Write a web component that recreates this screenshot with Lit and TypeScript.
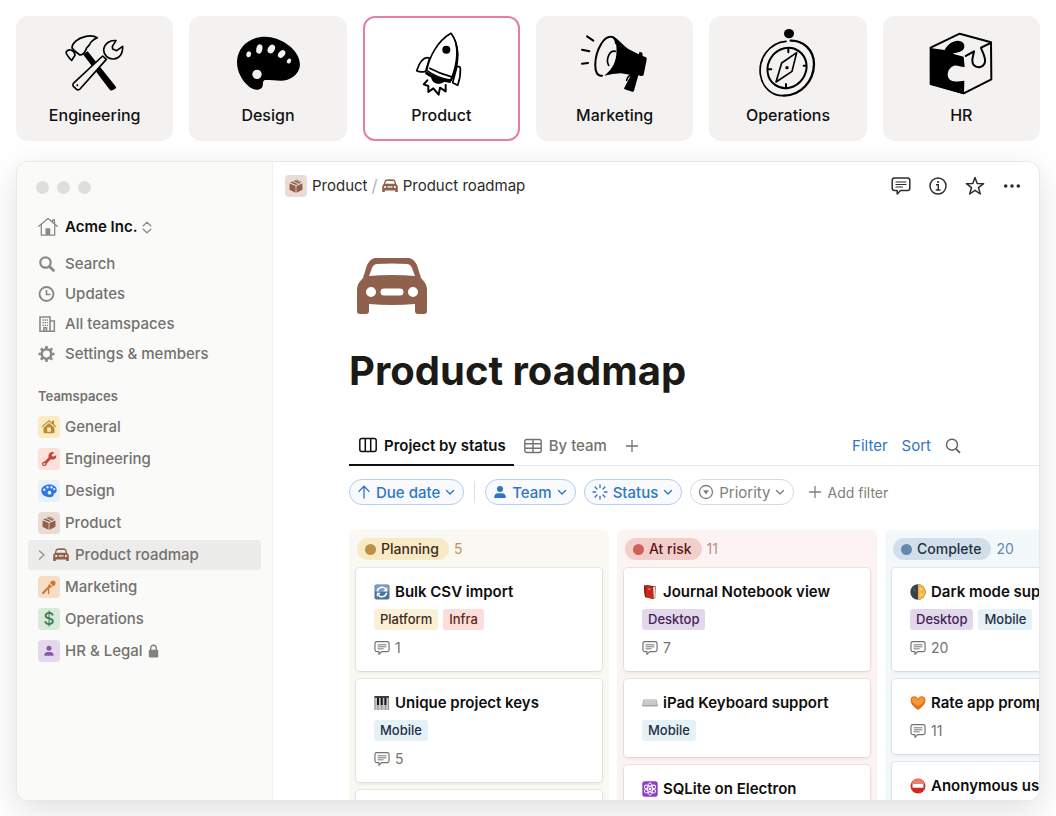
import { LitElement, html, svg, css, nothing } from "lit";
import { customElement, state } from "lit/decorators.js";
import { classMap } from "lit/directives/class-map.js";

/* ---------- large team illustrations ---------- */
const art = {
  engineering: html`<svg class="art" viewBox="182 90 204 204" aria-hidden="true">
    <path d="M248 163L262 154L345 258Q350 263 345 266L336 271Q331 273 327 268Z" fill="#000"/>
    <g fill="#f3f2f1" stroke="#000" stroke-width="5" stroke-linejoin="round" stroke-linecap="round">
      <path d="M215 144C215 129 232 115 254 110C266 107 282 108 291 113C279 118 270 126 267 135C264 140 257 142 257 149C253 158 247 165 239 165C232 160 222 154 215 144Z"/>
      <path d="M214 151C203 147 195 155 198 161C203 167 205 175 214 181C219 176 218 172 224 167C224 159 220 154 214 151Z"/>
      <path d="M307 168L318 178L239 267Q235 271 230 269L219 259Q216 255 219 250Z"/>
      <path d="M347 122C331 119 311 130 310 151C311 166 323 178 340 177C356 176 368 163 367 139L349 152L337 147L336 139Z"/>
    </g>
    <circle cx="231" cy="256" r="3" fill="#000"/></svg>`,
  design: html`<svg class="art" viewBox="702 90 204 204" aria-hidden="true">
    <path d="M796 110C838 110 899 145 900 194C898 224 870 242 842 242C825 242 806 239 795 240C785 243 792 257 785 264C774 273 758 270 745 258C727 242 711 217 711 186C712 140 749 110 796 110Z" fill="#000"/>
    <g fill="#f3f2f1"><circle cx="771" cy="223" r="14"/>
    <ellipse cx="746" cy="163" rx="7" ry="9" transform="rotate(12 746 163)"/>
    <ellipse cx="778" cy="147" rx="9" ry="14" transform="rotate(14 778 147)"/>
    <ellipse cx="814" cy="147" rx="10" ry="14" transform="rotate(30 814 147)"/>
    <ellipse cx="845" cy="162" rx="9" ry="13" transform="rotate(42 845 162)"/>
    <ellipse cx="867" cy="183" rx="6" ry="8" transform="rotate(30 867 183)"/></g></svg>`,
  product: html`<svg class="art" viewBox="172 90 204 204" aria-hidden="true">
    <g fill="#fff" stroke="#000" stroke-width="5" stroke-linejoin="round" stroke-linecap="round">
      <path d="M240 174C222 169 209 188 201 212Q212 218 228 214Z"/>
      <path d="M322 199Q332 198 332 206C333 225 329 243 324 256L309 248Z"/>
      <path d="M231 211C239 171 262 124 304 100C327 130 332 180 304 240Q265 236 231 211Z"/>
      <path d="M240 205Q272 222 304 230" fill="none"/>
    </g>
    <path d="M306 100C328 130 336 177 313 231L302 249C282 245 249 239 226 221L229 214Q264 235 301 239C324 190 325 135 306 100Z" fill="#000"/>
    <path d="M244 228L286 241C284 250 268 254 258 250C249 246 244 239 244 228Z" fill="#000"/>
    <circle cx="290" cy="149" r="12" fill="#000"/>
    <path d="M233 241L222 253L236 258L236 276L251 265L267 284L271 263L288 274L288 255" fill="none" stroke="#000" stroke-width="6" stroke-linejoin="round" stroke-linecap="round"/></svg>`,
  marketing: html`<svg class="art" viewBox="692 90 204 204" aria-hidden="true">
    <g fill="none" stroke="#000" stroke-width="6" stroke-linecap="round" stroke-linejoin="round">
      <path d="M710 109L729 122M695 149L717 154M695 191L713 189"/>
      <path d="M797 130C795 105 770 102 752 133C731 168 726 232 755 227"/>
      <path d="M795 154C776 150 766 180 775 196" stroke-width="5"/>
      <path d="M850 226C838 222 831 232 829 241" stroke-width="5"/>
    </g>
    <path d="M785 109C802 112 812 133 834 147L865 163L868 155L876 158L877 168L887 172Q890 174 889 179L880 224Q878 229 872 228L864 226L851 272Q850 276 846 275L823 268Q820 267 822 263L842 225L812 220Q786 221 762 227C777 215 796 195 798 163C800 138 797 118 785 109Z" fill="#000"/></svg>`,
  operations: html`<svg class="art" viewBox="162 90 204 204" aria-hidden="true">
    <ellipse cx="267" cy="101" rx="15" ry="14" fill="#000"/>
    <g fill="none" stroke="#000" stroke-linecap="round" stroke-linejoin="round">
      <path d="M258 124C207 128 175 177 181 223C187 264 217 289 252 287" stroke-width="5"/>
      <path d="M272 122C309 121 342 149 342 193C341 244 303 286 252 287" stroke-width="7"/>
      <ellipse cx="261" cy="204" rx="57" ry="62" transform="rotate(35 261 204)" stroke-width="6"/>
      <path d="M290 158L245 189L228 246L276 214Z" stroke-width="5"/>
      <path d="M265 146V157M311 197H317M204 208H214M258 252V262" stroke-width="6"/>
    </g><circle cx="261" cy="203" r="5" fill="#000"/></svg>`,
  hr: html`<svg class="art" viewBox="682 90 204 204" aria-hidden="true">
    <path d="M693 143L780 101L874 127L875 238L792 280L693 252Z" fill="none" stroke="#000" stroke-width="6" stroke-linejoin="round"/>
    <path d="M691 144L735 150C742 136 755 123 775 122C796 123 800 144 787 152C780 157 768 157 759 161L792 170L795 201C779 201 772 194 761 198C745 205 739 225 749 238C762 250 779 242 794 242L793 283L691 253Z" fill="#000"/>
    <path d="M873 129L844 143C847 155 858 170 856 186C852 203 833 206 822 195C812 182 822 167 823 154L796 169" fill="none" stroke="#000" stroke-width="6" stroke-linejoin="round"/></svg>`,
};

/* ---------- small glyphs ---------- */
const car = html`<svg class="car" viewBox="0 0 70 56" aria-hidden="true"><path fill="currentColor" fill-rule="evenodd" d="M18 0H52Q57 1 60 7L64 20Q70 26 70 31V53Q70 56 67 56H61Q58 56 58 53V46Q35 48 12 46V53Q12 56 9 56H3Q0 56 0 53V31Q0 26 6 20L10 7Q13 1 18 0ZM19 6Q16 7 15 10L12 18Q35 16 58 18L55 10Q54 7 51 6Q35 5 19 6ZM14 29A5 5 0 1 0 14 39A5 5 0 1 0 14 29ZM56 29A5 5 0 1 0 56 39A5 5 0 1 0 56 29ZM27 30.500A3.500 3.500 0 0 0 27 37.500H43A3.500 3.500 0 0 0 43 30.500Z"/></svg>`;
const smallCar = html`<svg class="i16" viewBox="0 0 16 16" aria-hidden="true"><path fill="currentColor" fill-rule="evenodd" d="M4.500 1.500Q8 1.100 11.500 1.500Q13 1.700 13.500 3.200L14.200 6Q15.800 7 15.800 8.800V14H13.200V12.400H2.800V14H.2V8.800Q.2 7 1.800 6L2.500 3.200Q3 1.700 4.500 1.500ZM4.700 2.900Q4 3 3.800 3.700L3.200 5.800H12.800L12.200 3.700Q12 3 11.300 2.900ZM2.300 7.900V9.900H4V7.900ZM12 7.900V9.900H13.700V7.900ZM5.500 8.300V9.600H10.500V8.300Z"/></svg>`;
const box = html`<svg class="i14" viewBox="0 0 14 14" aria-hidden="true"><path fill="currentColor" d="M.6 4.500L6.600 7V13.700L.9 11.100Q.5 10.900.5 10.300ZM13.400 4.500L7.400 7V13.700L13.100 11.100Q13.500 10.900 13.500 10.300ZM1.200 3.600L3.300 2.600L9.200 5.200L7 6.100ZM4.300 2.100L6.200 1.300L12 3.700L10.200 4.700ZM6.900.9L7.500.6L12.600 2.900L12.300 3.200Z"/></svg>`;
const comment = (cls: string) => html`<svg class=${cls} viewBox="0 0 20 20" aria-hidden="true"><g fill="none" stroke="currentColor" stroke-width="1.500" stroke-linejoin="round" stroke-linecap="round"><path d="M3.500 2H16.500Q18.800 2 18.800 4.300V12.200Q18.800 14.500 16.500 14.500H9.500L6.200 18V14.500H3.500Q1.200 14.500 1.200 12.200V4.300Q1.200 2 3.500 2Z"/><path d="M5 6H15M5 8.500H15M5 11H11.500" stroke-width="1.200"/></g></svg>`;
const chevron = html`<svg class="chev" viewBox="0 0 10 10" aria-hidden="true"><path d="M1.500 3.500L5 7L8.500 3.500" fill="none" stroke="currentColor" stroke-width="1.400" stroke-linecap="round" stroke-linejoin="round"/></svg>`;
const plus = html`<svg class="i14" viewBox="0 0 14 14" aria-hidden="true"><path d="M7 1V13M1 7H13" stroke="currentColor" stroke-width="1.300"/></svg>`;

const toolIcons = {
  search: html`<svg class="i18" viewBox="0 0 18 18" aria-hidden="true"><circle cx="7.500" cy="7.500" r="5.200" fill="none" stroke="currentColor" stroke-width="2.200"/><path d="M11.500 11.500L15.500 15.500" stroke="currentColor" stroke-width="2.600" stroke-linecap="round"/></svg>`,
  updates: html`<svg class="i18" viewBox="0 0 18 18" aria-hidden="true"><circle cx="8.500" cy="9" r="7" fill="none" stroke="currentColor" stroke-width="1.900"/><path d="M8.500 5V9.500H12.500" fill="none" stroke="currentColor" stroke-width="1.700"/></svg>`,
  teams: html`<svg class="i18" viewBox="0 0 18 18" aria-hidden="true"><g fill="none" stroke="currentColor" stroke-width="1.600"><path d="M2 16.200V2H12V16.200ZM12 6H16.300V16.200H12M6 16V12.800H8.500V16"/><path d="M4.500 5H6M6.600 5H8M8.700 5H10M4.500 7.700H6M6.600 7.700H8M8.700 7.700H10M4.500 10.400H6M6.600 10.400H8M8.700 10.400H10" stroke-width="1.300"/></g></svg>`,
  settings: html`<svg class="i18" viewBox="0 0 18 18" aria-hidden="true"><circle cx="8.500" cy="9" r="4.700" fill="none" stroke="currentColor" stroke-width="2.500"/><g stroke="currentColor" stroke-width="2.600">${[0, 45, 90, 135, 180, 225, 270, 315].map(
    (a) => svg`<path d="M8.500 1V4" transform="rotate(${a} 8.500 9)"/>`
  )}</g></svg>`,
};

const spaceIcons = {
  general: html`<svg class="i16" viewBox="0 0 16 16" aria-hidden="true"><path fill="currentColor" fill-rule="evenodd" d="M8 1L11 3.600V1.800H13V5.300L15.500 7.500L14.700 8.300L8 2.500L1.300 8.300L.5 7.500ZM8 4L13.500 8.700V13Q13.500 14.200 12.300 14.200H3.700Q2.500 14.200 2.500 13V8.700ZM6.200 8.500V12.800H9.800V8.500Z"/></svg>`,
  engineering: html`<svg class="i16" viewBox="0 0 16 16" aria-hidden="true"><path fill="currentColor" fill-rule="evenodd" d="M13.500 1.500L10.500 4L12 5.700L15.300 4.300Q15.600 8 12.200 8.600L9.500 8.500L5.800 12.500Q5.500 15.200 2.800 15.200Q.5 14.500 1 12Q1.800 10.700 3.700 10.500L7.500 6.500Q7 2.500 10 1.300Q12 .7 13.500 1.500ZM3.300 12A1 1 0 1 0 3.300 14A1 1 0 1 0 3.300 12Z"/></svg>`,
  design: html`<svg class="i16" viewBox="0 0 16 16" aria-hidden="true"><path fill="currentColor" fill-rule="evenodd" d="M8.500 1.500C13 1.500 15.800 4 15.700 7.500C15.500 10.500 12.500 10 12.600 11.500C12.900 13.500 11 14.300 8.500 14.200C3.500 14 .3 11.300.3 7.500C.5 4 4 1.500 8.500 1.500ZM6.500 3A1.200 1.200 0 1 0 6.500 5.400A1.200 1.200 0 1 0 6.500 3ZM10.500 3A1.200 1.200 0 1 0 10.500 5.400A1.200 1.200 0 1 0 10.500 3ZM3.300 5.500A1.200 1.200 0 1 0 3.300 7.900A1.200 1.200 0 1 0 3.300 5.500ZM13.200 5A1.100 1.100 0 1 0 13.200 7.200A1.100 1.100 0 1 0 13.200 5ZM8.500 7.800A1.900 1.900 0 1 0 8.500 11.600A1.900 1.900 0 1 0 8.500 7.800Z"/></svg>`,
  product: box,
  marketing: html`<svg class="i16" viewBox="0 0 16 16" aria-hidden="true"><g fill="none" stroke="currentColor" stroke-linecap="round"><path d="M9 7L2 14" stroke-width="2.200"/><path d="M7.600 9V14.500" stroke-width="1.300"/></g><path fill="currentColor" d="M8 4.800L11.300 8L9 8.700L7.300 7ZM9 4Q10 1 12.700 1.500Q15.300 2.500 14.300 5.500Q13.500 7 12 7.200Z"/></svg>`,
  operations: html`<span class="dollar">$</span>`,
  hr: html`<svg class="i16" viewBox="0 0 16 16" aria-hidden="true"><circle cx="8" cy="5.200" r="2.500" fill="currentColor"/><path d="M3.300 12.700Q3.300 9 7 9H9Q12.700 9 12.700 12.700Z" fill="currentColor"/></svg>`,
};

const emoji = {
  sync: html`<svg class="i16" viewBox="0 0 16 16" aria-hidden="true"><rect x=".5" y=".5" width="15" height="15" rx="2" fill="#4d7299"/><rect x="1" y="1" width="14" height="7" rx="2" fill="#7d9cbb"/><g fill="none" stroke="#fff" stroke-width="1.600"><path d="M3.200 7.200A5 5 0 0 1 11.500 4.700M12.800 8.800A5 5 0 0 1 4.500 11.300"/></g><path d="M13.200 3V7.200H9.200ZM2.800 13V8.800H6.800Z" fill="#fff"/></svg>`,
  piano: html`<svg class="i16" viewBox="0 0 16 16" aria-hidden="true"><rect x=".5" y="1" width="14.500" height="14" fill="#c9c9c9"/><path d="M.5 1H15V3H.5Z" fill="#3c3c3c"/><path d="M4 3V15M7.700 3V15M11.400 3V15M.9 2V15M14.600 2V15" stroke="#777" stroke-width=".7"/><path d="M4 3V10M7.700 3V10M11.400 3V10" stroke="#151515" stroke-width="2"/></svg>`,
  book: html`<svg class="i16" viewBox="0 0 16 16" aria-hidden="true"><path d="M2 2L5 1L14 2.500L13.500 14L11 15L3 13Z" fill="#7c1712"/><path d="M2 1.500L10.500 2.500L11.500 15L3 13Z" fill="#c5281f"/><path d="M11 3L13.500 2.500L13.800 13.300L11.700 14.500Z" fill="#e6d9cd"/><path d="M2 1.500L3.300 1.700L4.200 13.300L3 13Z" fill="#851712"/><path d="M6 5L8.500 5.300" stroke="#e49388" stroke-width="1"/></svg>`,
  keyboard: html`<svg class="i16" viewBox="0 0 16 16" aria-hidden="true"><path d="M1.500 4.500H14.500L16 10.500Q16 11.500 15 11.500H1Q0 11.500 0 10.500Z" fill="#a8a8a6"/><path d="M2 5H14L15 9.800H1Z" fill="#d4d3cf"/><path d="M1.800 6.500H14.200M1.500 8.200H14.500" stroke="#aaa9a6" stroke-width=".6" stroke-dasharray="1 .5"/></svg>`,
  atom: html`<svg class="i16" viewBox="0 0 16 16" aria-hidden="true"><rect x=".3" y=".3" width="15.400" height="15.400" rx="2.500" fill="#8e3fc4"/><g fill="none" stroke="#fff" stroke-width=".9">${[0, 60, 120].map(
    (a) => svg`<ellipse cx="8" cy="8" rx="2.400" ry="6.200" transform="rotate(${a} 8 8)"/>`
  )}</g><circle cx="8" cy="8" r="1.300" fill="#fff"/></svg>`,
  moon: html`<svg class="i16" viewBox="0 0 16 16" aria-hidden="true"><circle cx="8" cy="8" r="7.700" fill="#37404f"/><path d="M8 .3A7.700 7.700 0 0 1 8 15.700Z" fill="#eeb63c"/><circle cx="11" cy="5" r="1.500" fill="#f8d576"/><circle cx="11.500" cy="10.500" r="1.800" fill="#f6cc61"/><circle cx="4.500" cy="6" r="1.400" fill="#4b566a"/></svg>`,
  heart: html`<svg class="i16" viewBox="0 0 16 16" aria-hidden="true"><path d="M8 15Q.5 10 .5 5.200Q.7 1.500 4.300 1.300Q6.800 1.300 8 3.700Q9.200 1.300 11.700 1.300Q15.300 1.500 15.500 5.200Q15.500 10 8 15Z" fill="#e2731d"/><path d="M8 11Q2 8 1.800 5Q2 2.500 4.300 2.300Q6.500 2.500 8 5.300Q9.500 2.500 11.700 2.300Q14 2.500 14.200 5Q14 8 8 11Z" fill="#f29a3a"/></svg>`,
  stop: html`<svg class="i16" viewBox="0 0 16 16" aria-hidden="true"><circle cx="8" cy="8" r="7.500" fill="#cf2b1f"/><path d="M1.500 6Q3 1 8 1T14.500 6Z" fill="#ef7d6d"/><rect x="2.500" y="6" width="11" height="3.800" rx=".6" fill="#fff"/></svg>`,
};

type Tag = "Platform" | "Infra" | "Mobile" | "Desktop";
interface Card { icon?: keyof typeof emoji; title?: string; tags?: Tag[]; comments?: number; }
interface Column { id: string; name: string; count: number; cards: Card[]; }

const columns: Column[] = [
  { id: "planning", name: "Planning", count: 5, cards: [
    { icon: "sync", title: "Bulk CSV import", tags: ["Platform", "Infra"], comments: 1 },
    { icon: "piano", title: "Unique project keys", tags: ["Mobile"], comments: 5 },
    {},
  ] },
  { id: "risk", name: "At risk", count: 11, cards: [
    { icon: "book", title: "Journal Notebook view", tags: ["Desktop"], comments: 7 },
    { icon: "keyboard", title: "iPad Keyboard support", tags: ["Mobile"] },
    { icon: "atom", title: "SQLite on Electron" },
  ] },
  { id: "complete", name: "Complete", count: 20, cards: [
    { icon: "moon", title: "Dark mode support", tags: ["Desktop", "Mobile"], comments: 20 },
    { icon: "heart", title: "Rate app prompt", comments: 11 },
    { icon: "stop", title: "Anonymous user" },
  ] },
];

const teams: [keyof typeof art, string][] = [
  ["engineering", "Engineering"], ["design", "Design"], ["product", "Product"],
  ["marketing", "Marketing"], ["operations", "Operations"], ["hr", "HR"],
];

@customElement("team-picker")
export class TeamPicker extends LitElement {
  @state() private selected = "product";

  static styles = css`
    :host { display: block; }
    .teams { display: grid; grid-template-columns: repeat(6, 1fr); gap: 16px; }
    .team {
      display: flex; flex-direction: column; align-items: center; gap: 5px;
      padding: 12px 0; border: 2px solid transparent; border-radius: 12px;
      background: #f3f2f1; color: #111; font: 500 16px/24px Inter, sans-serif; cursor: pointer;
    }
    .team.on { background: #fff; border-color: #e57fa9; }
    .art { width: 68px; height: 68px; overflow: visible; }
  `;

  render() {
    return html`<div class="teams" role="tablist" aria-label="Teams">
      ${teams.map(([id, name]) => html`<button role="tab" aria-selected=${id === this.selected}
        class=${classMap({ team: true, on: id === this.selected })}
        @click=${() => (this.selected = id)}>${art[id]}<span>${name}</span></button>`)}
    </div>`;
  }
}

@customElement("side-bar")
export class SideBar extends LitElement {
  static styles = css`
    :host {
      display: block; box-sizing: border-box; padding: 19px 11px 0;
      background: #fafaf9; border-right: 1px solid #f1f1ef;
      color: #73726e; font: 500 15px/20px Inter, sans-serif;
    }
    .lights { display: flex; gap: 8px; padding: 0 8px; margin-bottom: 18px; }
    .lights span { width: 13px; height: 13px; border-radius: 50%; background: #dededc; }
    .row {
      display: flex; align-items: center; gap: 5px; box-sizing: border-box; width: 100%; height: 30px;
      padding: 0 10px; border: 0; border-radius: 4px; background: none;
      color: inherit; font: inherit; text-decoration: none; text-align: left; cursor: pointer;
    }
    .workspace { color: #0f0f0f; font-weight: 600; margin-bottom: 7px; }
    .slot { display: grid; align-items: center; justify-items: start; flex: none; width: 22px; height: 22px; color: #8a8985; }
    .spaces { display: grid; gap: 2px; margin-top: 2px; }
    h2 { margin: 13px 0 0; padding-left: 10px; font: 600 13px/28px Inter, sans-serif; }
    .current { background: #ececea; gap: 6px; }
    .current .arrow { margin-right: 1px; }
    .badge { display: grid; place-items: center; flex: none; width: 22px; height: 22px; border-radius: 4px; }
    .general { background: #faebc5; color: #bf8a2f; }
    .engineering { background: #fbe0dc; color: #c4473b; }
    .design { background: #e8f1fa; color: #2f77db; }
    .product { background: #e9dbd5; color: #8f604b; }
    .marketing { background: #f7dcc6; color: #cb7836; }
    .operations { background: #d8ead9; color: #3e7a55; }
    .hr { background: #e4d9ec; color: #8457a8; }
    .dollar { font: 500 17px/22px Inter, sans-serif; }
    .brown { display: grid; color: #8f604b; }
    .i18 { width: 18px; height: 18px; }
    .i16 { width: 16px; height: 16px; }
    .i14 { width: 14px; height: 14px; }
    .i20 { width: 20px; height: 20px; }
    .arrow { width: 8px; height: 12px; }
    .lock { width: 11px; height: 14px; }
    .updown { width: 10px; height: 13px; }
  `;

  render() {
    const tools: [keyof typeof toolIcons, string][] = [
      ["search", "Search"], ["updates", "Updates"], ["teams", "All teamspaces"], ["settings", "Settings & members"],
    ];
    const spaces: [keyof typeof spaceIcons, string][] = [
      ["general", "General"], ["engineering", "Engineering"], ["design", "Design"], ["product", "Product"],
      ["marketing", "Marketing"], ["operations", "Operations"], ["hr", "HR & Legal"],
    ];
    return html`
      <div class="lights"><span></span><span></span><span></span></div>
      <button class="row workspace">
        <span class="slot"><svg class="i20" viewBox="0 0 20 20" aria-hidden="true"><g fill="none" stroke="currentColor" stroke-width="1.300" stroke-linejoin="round" stroke-linecap="round"><path d="M.8 9.300L10 1.500L19.200 9.300M3.300 7.500V18.200H16.700V7.500M14.500 5V3H16.500V7"/></g><path d="M7.500 11.300H12.300V18H7.500Z" fill="currentColor"/></svg></span>
        Acme Inc.
        <svg class="updown" viewBox="0 0 10 13" aria-hidden="true"><path d="M1.200 4.700L5 1.200L8.800 4.700M1.200 8.300L5 11.800L8.800 8.300" fill="none" stroke="#8a8985" stroke-width="1.300" stroke-linecap="round" stroke-linejoin="round"/></svg>
      </button>
      <div class="tools">
        ${tools.map(([id, name]) => html`<button class="row"><span class="slot">${toolIcons[id]}</span>${name}</button>`)}
      </div>
      <h2>Teamspaces</h2>
      <nav class="spaces" aria-label="Teamspaces">
        ${spaces.map(([id, name]) => html`
          <a class="row" href="#${id}"><span class="badge ${id}">${spaceIcons[id]}</span>${name}
            ${id === "hr" ? html`<svg class="lock" viewBox="0 0 11 14" aria-label="Private"><path d="M2.700 6V4A2.800 2.800 0 0 1 8.300 4V6" fill="none" stroke="#82817d" stroke-width="1.400"/><rect x=".8" y="5.800" width="9.400" height="7.600" rx="1" fill="#82817d"/></svg>` : nothing}
          </a>
          ${id === "product" ? html`<a class="row current" href="#roadmap" aria-current="page">
            <svg class="arrow" viewBox="0 0 8 12" aria-hidden="true"><path d="M1.500 2L6 6L1.500 10" fill="none" stroke="#91908c" stroke-width="1.300" stroke-linecap="round"/></svg>
            <span class="brown">${smallCar}</span>Product roadmap</a>` : nothing}`)}
      </nav>`;
  }
}

@customElement("status-board")
export class StatusBoard extends LitElement {
  static styles = css`
    :host { display: flex; gap: 8px; overflow: hidden; }
    .column { flex: none; box-sizing: border-box; width: 260px; padding: 8px 7px; border-radius: 6px 6px 0 0; }
    .planning { background: #f9f8f3; }
    .risk { background: #fdf3f3; }
    .complete { background: #f3f8fb; }
    .head { display: flex; align-items: center; gap: 5px; margin-bottom: 8px; padding-left: 1px; font: 400 14px/22px Inter, sans-serif; }
    h3 { display: flex; align-items: center; gap: 5px; margin: 0; padding: 0 10px 0 8px; border-radius: 11px; font: 500 14px/22px Inter, sans-serif; }
    .dot { width: 11px; height: 11px; border-radius: 50%; }
    .planning h3 { background: #f8eac4; color: #402c1b; }
    .planning .dot { background: #bd9144; }
    .planning .count { color: #c29355; }
    .risk h3 { background: #f2cfcb; color: #5d1715; }
    .risk .dot { background: #cd6156; }
    .risk .count { color: #bd8b83; }
    .complete h3 { background: #d2dfeb; color: #1d3144; }
    .complete .dot { background: #6489b1; }
    .complete .count { color: #6489b1; }
    .cards { display: grid; gap: 8px; }
    .card {
      box-sizing: border-box; min-height: 60px; padding: 12px 18px 13px; border-radius: 4px; background: #fff;
      box-shadow: 0 0 0 1px rgba(15, 15, 15, .07), 0 2px 4px rgba(15, 15, 15, .06);
    }
    h4 { display: flex; align-items: center; gap: 5px; margin: 0; color: #0f0f0f; font: 600 15px/24px Inter, sans-serif; white-space: nowrap; }
    .tags { display: flex; gap: 5px; margin-top: 5px; }
    .tags:last-child { margin-bottom: 3px; }
    .tag { padding: 0 6px; border-radius: 3px; font: 500 13px/21px Inter, sans-serif; }
    .Platform { background: #faf0d7; color: #402c1b; }
    .Infra { background: #fbdeda; color: #5d2a20; }
    .Mobile { background: #e5f0f7; color: #1d3144; }
    .Desktop { background: #e2d8ea; color: #412454; }
    .meta { display: flex; align-items: center; gap: 5px; margin-top: 8px; color: #73726e; font: 400 14px/20px Inter, sans-serif; }
    h4 + .meta { margin-top: 6px; }
    .i16 { flex: none; width: 16px; height: 16px; }
  `;

  render() {
    return columns.map((col) => html`
      <section class="column ${col.id}">
        <div class="head"><h3><span class="dot"></span>${col.name}</h3><span class="count">${col.count}</span></div>
        <div class="cards">
          ${col.cards.map((c) => html`<article class="card">
            ${c.title && c.icon ? html`<h4>${emoji[c.icon]}${c.title}</h4>` : nothing}
            ${c.tags ? html`<div class="tags">${c.tags.map((t) => html`<span class="tag ${t}">${t}</span>`)}</div>` : nothing}
            ${c.comments ? html`<div class="meta">${comment("i16")}${c.comments}</div>` : nothing}
          </article>`)}
        </div>
      </section>`);
  }
}

@customElement("app-root")
export class AppRoot extends LitElement {
  static styles = css`
    :host {
      display: flex; flex-direction: column; gap: 20px; box-sizing: border-box; height: 100vh;
      padding: 16px 16px 15px; overflow: hidden; background: #fff; font-family: Inter, sans-serif;
    }
    button { padding: 0; border: 0; background: none; color: inherit; font: inherit; cursor: pointer; }
    a { color: inherit; text-decoration: none; }
    .window {
      display: grid; grid-template-columns: 256px minmax(0, 1fr); flex: 1; min-height: 0; overflow: hidden;
      border: 1px solid #e8e8e6; border-radius: 12px; background: #fff;
      box-shadow: 0 10px 34px rgba(0, 0, 0, .13);
    }
    .main { display: flex; flex-direction: column; min-width: 0; min-height: 0; }
    .topbar { display: flex; align-items: center; justify-content: space-between; flex: none; height: 48px; padding: 0 17px 0 12px; color: #2c2c2a; font-size: 15px; line-height: 20px; }
    .crumbs, .actions, .crumb { display: flex; align-items: center; }
    .crumbs { gap: 4px; }
    .crumb { gap: 5px; }
    .slash { color: #b5b4b1; font-size: 17px; }
    .actions { gap: 17px; }
    .actions button { display: grid; }
    .badge { display: grid; place-items: center; width: 22px; height: 22px; border-radius: 4px; background: #e9dbd5; color: #8f604b; }
    .brown { display: grid; color: #8f604b; }
    .i20 { width: 20px; height: 20px; }
    .i18 { width: 18px; height: 18px; }
    .i16 { width: 16px; height: 16px; }
    .i14 { width: 14px; height: 14px; }
    .chev { width: 10px; height: 10px; }
    .hero { padding: 48px 0 0 84px; color: #8f604b; }
    .car { display: block; width: 70px; height: 56px; }
    h1 { margin: 31px 0 29px 76px; color: #1b1a17; font: 700 40px/52px Inter, sans-serif; }
    .views { display: flex; align-items: stretch; flex: none; height: 40px; box-sizing: border-box; margin-left: 76px; border-bottom: 1px solid #e9e9e7; font-size: 15px; color: #73726e; }
    .view { display: flex; align-items: center; gap: 7px; padding: 0 8px 0 10px; font-weight: 500; }
    .view.on { margin-bottom: -1px; color: #0f0f0f; font-weight: 600; border-bottom: 2px solid #0f0f0f; }
    .add { display: grid; place-items: center; margin-left: 10px; }
    .right { display: flex; align-items: center; gap: 14px; margin-left: auto; padding-right: 78px; color: #2f76c4; }
    .find { display: grid; color: #5f5e5b; }
    .filters { display: flex; align-items: center; gap: 8px; flex: none; height: 26px; margin: 13px 0 25px 76px; color: #2f76c4; font-size: 15px; white-space: nowrap; }
    .chip { display: flex; align-items: center; gap: 5px; box-sizing: border-box; height: 26px; padding: 0 8px 0 7px; border: 1px solid #b5cff0; border-radius: 13px; background: #f8fafe; font-weight: 500; }
    .chip.off { border-color: #dadad8; background: #fff; color: #80807c; font-weight: 400; }
    .sep { width: 1px; height: 22px; margin: 0 2px; background: #e1e1df; }
    .more { display: flex; align-items: center; gap: 5px; margin-left: 6px; color: #80807c; font-size: 14px; }
    status-board { flex: 1; min-height: 0; margin-left: 76px; }
  `;

  render() {
    return html`
      <team-picker></team-picker>
      <div class="window">
        <side-bar></side-bar>
        <main class="main">
          <header class="topbar">
            <nav class="crumbs" aria-label="Breadcrumb">
              <a class="crumb" href="#product"><span class="badge">${box}</span>Product</a>
              <span class="slash">/</span>
              <a class="crumb" href="#roadmap"><span class="brown">${smallCar}</span>Product roadmap</a>
            </nav>
            <div class="actions">
              <button aria-label="Comments">${comment("i20")}</button>
              <button aria-label="Info"><svg class="i20" viewBox="0 0 20 20"><circle cx="10" cy="10" r="8" fill="none" stroke="currentColor" stroke-width="1.500"/><circle cx="10" cy="6" r="1.100" fill="currentColor"/><path d="M8 8.800H10.300V13.800M7.800 14H12.500" fill="none" stroke="currentColor" stroke-width="1.400"/></svg></button>
              <button aria-label="Favorite"><svg class="i20" viewBox="0 0 20 20"><path d="M10 1.500L12.200 7.500L18.600 7.700L13.500 11.700L15.300 18L10 14.300L4.700 18L6.500 11.700L1.400 7.700L7.800 7.500Z" fill="none" stroke="currentColor" stroke-width="1.500" stroke-linejoin="round"/></svg></button>
              <button aria-label="More"><svg class="i20" viewBox="0 0 20 20"><g fill="currentColor"><circle cx="3.700" cy="10" r="1.800"/><circle cx="10" cy="10" r="1.800"/><circle cx="16.300" cy="10" r="1.800"/></g></svg></button>
            </div>
          </header>
          <div class="hero">${car}</div>
          <h1>Product roadmap</h1>
          <div class="views">
            <button class="view on"><svg class="i18" viewBox="0 0 18 18" aria-hidden="true"><g fill="none" stroke="currentColor" stroke-width="1.500"><rect x=".8" y="2.500" width="16.400" height="13" rx="2"/><path d="M6.300 2.500V15.500M11.700 2.500V15.500"/></g></svg>Project by status</button>
            <button class="view"><svg class="i18" viewBox="0 0 18 18" aria-hidden="true"><g fill="none" stroke="currentColor" stroke-width="1.400"><rect x=".8" y="2.500" width="16.400" height="13" rx="2"/><path d="M9 2.500V15.500M1 6.800H17M1 11.200H17"/></g></svg>By team</button>
            <button class="add" aria-label="Add view">${plus}</button>
            <div class="right">
              <button>Filter</button><button>Sort</button>
              <button class="find" aria-label="Search"><svg class="i16" viewBox="0 0 16 16"><circle cx="7" cy="6.700" r="5.500" fill="none" stroke="currentColor" stroke-width="1.400"/><path d="M11 10.800L15 14.800" stroke="currentColor" stroke-width="1.700"/></svg></button>
            </div>
          </div>
          <div class="filters">
            <button class="chip"><svg class="i14" viewBox="0 0 14 14" aria-hidden="true"><path d="M7 13V1.500M2 6.300L7 1.300L12 6.300" fill="none" stroke="currentColor" stroke-width="1.300" stroke-linecap="round" stroke-linejoin="round"/></svg>Due date${chevron}</button>
            <span class="sep"></span>
            <button class="chip"><svg class="i14" viewBox="0 0 14 14" aria-hidden="true"><circle cx="7" cy="4" r="3" fill="currentColor"/><path d="M1.200 13Q1 8.500 5 8.300H9Q13 8.500 12.800 13Z" fill="currentColor"/></svg>Team${chevron}</button>
            <button class="chip"><svg class="i16" viewBox="0 0 16 16" aria-hidden="true"><g stroke="currentColor" stroke-width="1.300" stroke-linecap="round">${[0, 45, 90, 135, 180, 225, 270, 315].map(
              (a) => svg`<path d="M8 1V3.700" transform="rotate(${a} 8 8)"/>`
            )}</g></svg>Status${chevron}</button>
            <button class="chip off"><svg class="i16" viewBox="0 0 16 16" aria-hidden="true"><circle cx="8" cy="8" r="6.500" fill="none" stroke="currentColor" stroke-width="1.300"/><path d="M5 6.200H11L8 10.600Z" fill="currentColor"/></svg>Priority${chevron}</button>
            <button class="more">${plus}Add filter</button>
          </div>
          <status-board></status-board>
        </main>
      </div>`;
  }
}
